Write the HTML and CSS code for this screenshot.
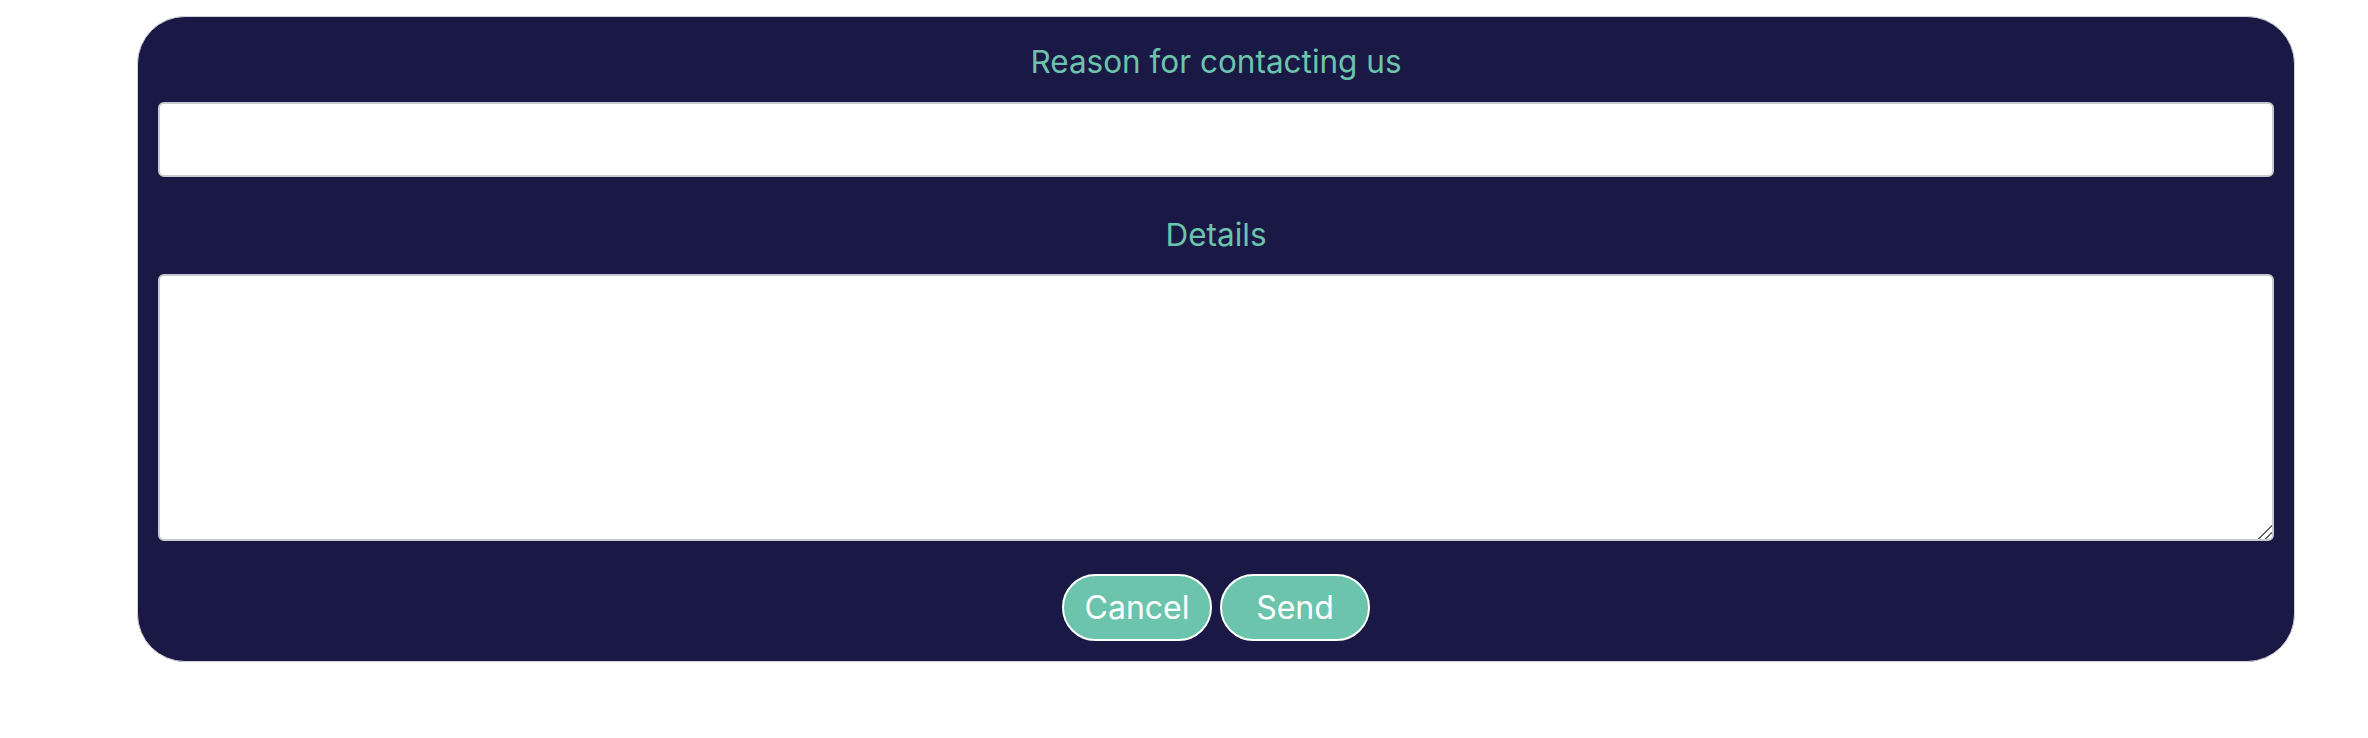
FILE: index.html
```html
<!DOCTYPE html>
<html>
<head>
<meta charset="utf-8">
<link rel="stylesheet" href="styles.css">
</head>
<body>
<form class="card">
  <label class="label label-first" for="reason">Reason for contacting us</label>
  <input class="field field-input" id="reason" type="text">
  <label class="label label-second" for="details">Details</label>
  <textarea class="field field-area" id="details"></textarea>
  <div class="actions">
    <button type="button" class="btn">Cancel</button>
    <button type="button" class="btn">Send</button>
  </div>
</form>
</body>
</html>
```
FILE: styles.css
```css
html, body {
  margin: 0;
  padding: 0;
  background: #ffffff;
}
body {
  font-family: "Inter", "Open Sans", sans-serif;
}
.card {
  box-sizing: border-box;
  width: 2158px;
  margin: 16px 0 0 137px;
  padding: 25px 20px 20px;
  background: #1a1844;
  border: 1px solid #cfcfd6;
  border-radius: 48px;
  display: flex;
  flex-direction: column;
}
.label {
  display: block;
  text-align: center;
  color: #6cc4ac;
  font-size: 31.5px;
  line-height: 40px;
}
.label-first { margin-bottom: 20px; }
.label-second { margin-top: 38px; margin-bottom: 19px; }
.field {
  box-sizing: border-box;
  width: 100%;
  margin: 0;
  background: #ffffff;
  border: 2px solid #c9c9d1;
  border-radius: 6px;
  font-family: inherit;
  font-size: 24px;
  padding: 8px 12px;
}
.field-input { height: 75px; }
.field-area { height: 267px; resize: vertical; display: block; }
.field-area::-webkit-scrollbar { width: 16px; height: 16px; background: transparent; }
.field-area::-webkit-resizer {
  background: linear-gradient(135deg,
    transparent 0 52%,
    #666666 52% 58%,
    transparent 58% 76%,
    #666666 76% 82%,
    transparent 82% 100%);
}
.actions {
  display: flex;
  justify-content: center;
  gap: 8px;
  margin-top: 33px;
}
.btn {
  box-sizing: border-box;
  width: 150px;
  height: 67px;
  background: #6cc4ac;
  color: #ffffff;
  border: 2px solid #ffffff;
  border-radius: 34px;
  font-family: inherit;
  font-size: 32px;
  padding: 0;
  cursor: pointer;
}
```
